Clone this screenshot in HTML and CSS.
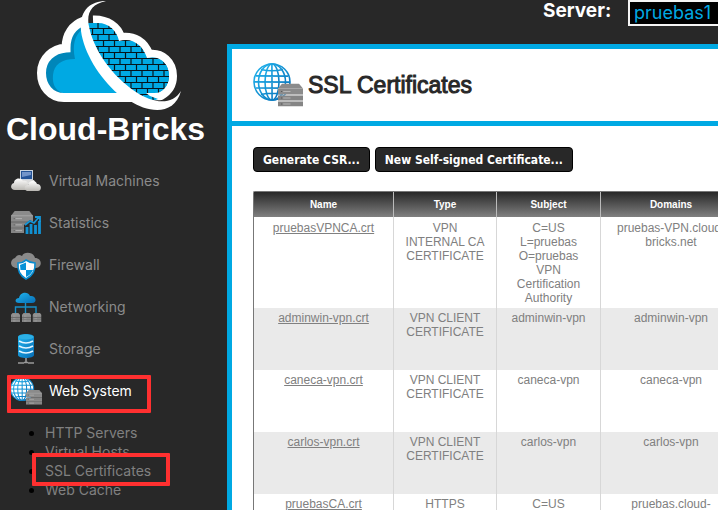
FILE: index.html
```html
<!DOCTYPE html>
<html lang="en">
<head>
<meta charset="utf-8">
<title>SSL Certificates - Cloud-Bricks</title>
<link rel="stylesheet" href="styles.css">
</head>
<body>
<svg class="defs" width="0" height="0" aria-hidden="true">
  <defs>
    <linearGradient id="blue" x1="0" y1="0" x2="1" y2="1"><stop offset="0" stop-color="#20b5ef"/><stop offset="1" stop-color="#076db5"/></linearGradient>
    <linearGradient id="puff" x1="0" y1="0" x2="0" y2="1"><stop offset="0" stop-color="#fff"/><stop offset="1" stop-color="#b9b7b2"/></linearGradient>
    <pattern id="bricks" width="11" height="12" patternUnits="userSpaceOnUse" patternTransform="translate(2 4)">
      <rect width="11" height="12" fill="#00a9e3"/>
      <path d="M0 .5H11M0 6.5H11M2.500 0V6M8 6V12" stroke="#06141b" stroke-width="1.2"/>
    </pattern>
    <symbol id="server" viewBox="0 0 24 23" preserveAspectRatio="none">
      <path d="M4 0H20L24 5V11H0V5Z" fill="#8b8b8b"/>
      <path d="M0 12H24V17H0ZM0 18H24V23H0Z" fill="#858585"/>
      <path d="M0 5H24M0 11.5H24M0 17.5H24" stroke="#b5b5b5" stroke-width=".7"/>
      <path d="M5 8H12M5 14.5H12M5 20.5H12" stroke="#bfbfbf" stroke-width=".8"/>
      <path d="M3 8H4M3 14.5H4M3 20.5H4" stroke="#555"/>
    </symbol>
    <symbol id="globe" viewBox="0 0 50 44">
      <g fill="none" stroke="url(#blue)" stroke-width="1.6">
        <circle cx="19" cy="19" r="18"/>
        <ellipse cx="19" cy="19" rx="7" ry="18"/>
        <ellipse cx="19" cy="19" rx="13.5" ry="18"/>
        <path d="M18.9 1L19.1 37M1 18.9L37 19.1M3 12.9L35 13.1M3 25L35 25.1M8 6.5Q19 9 30 6.5M8 31.5Q19 29 30 31.5"/>
      </g>
      <use href="#server" x="25" y="20.500" width="25" height="23"/>
    </symbol>
  </defs>
</svg>

<div class="layout">
  <aside class="sidebar">
    <a class="brand" href="#">
      <svg class="brand-mark" viewBox="36 0 148 112" aria-hidden="true">
        <path d="M132 97.500H64C50 97.500 41.500 86 41.500 73C41.500 58 53 49 66 48C66 34 73 25 84 22C86 46 98 70 126 96Z" fill="#0086b9"/>
        <path d="M126 94H66C56 92 52 85 53 75C54 65 61 59 75 59C72 44 75 36 82 29C86 51 100 74 126 94Z" fill="#00a9e3"/>
        <path d="M137 97.500H64C50 97.500 41.500 86 41.500 73C41.500 58 53 49 66 48C66 34 73 25 84 21" fill="none" stroke="#fff" stroke-width="9"/>
        <path d="M86 23H98C109 23 117 31 119 41C132 37 143 45 147 58C161 55 169 64 169 76C169 85 165 91 161 94L155 100H146C118 86 96 60 86 23Z" fill="url(#bricks)"/>
        <path d="M93 19.500C108 19 118 27 121 37C134 35 145 42 149 54C162 52 173 62 173 76C173 86 168 92 161 96C155 97 150 95 146 93" fill="none" stroke="#fff" stroke-width="8"/>
        <path d="M86 23H98C109 23 117 31 119 41C132 37 143 45 147 58C161 55 169 64 169 76C169 86 162 94 153 93L146 93L150 96L158 99L155 100H146C118 86 96 60 86 23Z" fill="url(#bricks)"/>
        <path d="M106 1C89 1 79 12 81 31C84 53 99 77 118 94L130 101C147 112 174 117 181 91C171 107 151 102 136 92C112 76 93 50 88.500 24C87 12 92 4 106 1Z" fill="#fff"/>
      </svg>
      <span class="brand-name">Cloud-Bricks</span>
    </a>

    <nav>
      <ul class="menu">
        <li><a href="#">
          <svg class="icon" viewBox="0 0 32 32" aria-hidden="true">
            <rect x="10.500" y="5.500" width="12" height="9" fill="#245397" stroke="#c9d3df"/>
            <path d="M12 7H21V10L12 12Z" fill="#7294c9"/>
            <path d="M8 15H24L26 19H7Z" fill="#ddd"/>
            <path d="M5 25C0 25 0 19 4 18C4 13 11 12 13 16C18 15 19 19 18 25Z" fill="url(#puff)"/>
            <path d="M17 26C13 24 15 20 18 20C19 15 26 15 27 19C32 19 32 26 28 26Z" fill="url(#puff)"/>
          </svg>Virtual Machines</a></li>
        <li><a href="#">
          <svg class="icon" viewBox="0 0 32 32" aria-hidden="true">
            <use href="#server" x="1" y="4" width="22" height="22"/>
            <path d="M14 18L20 13L23 15L30 8V28H14Z" fill="#282828"/>
            <path d="M17 20V27M21 17V27M25.500 18V27M29.500 14V27" stroke="#1191d2" stroke-width="2.800"/>
            <path d="M15 18L20 14L24 16L29 10M25 10H30V15" fill="none" stroke="#1396d8" stroke-width="1.800"/>
          </svg>Statistics</a></li>
        <li><a href="#">
          <svg class="icon" viewBox="0 0 32 32" aria-hidden="true">
            <path d="M7 19C0 19-1 11 5 9C7 6 9 5 12 7C14 2 24 3 25 9C32 9 33 18 26 19Z" fill="#8a8a8a"/>
            <path d="M8 14Q13 14 16 11Q20 14 25 14Q26 25 16 30Q7 25 8 14Z" fill="#fff" stroke="#078cd0" stroke-width="1.600"/>
            <path d="M10 16L16 13.500V21H10.500ZM16 21H23Q21 26 16 28Z" fill="#0792d8"/>
          </svg>Firewall</a></li>
        <li><a href="#">
          <svg class="icon" viewBox="0 0 32 32" aria-hidden="true">
            <path d="M9 12C4 12 5 7 9 7C10 1 18 0 20 5C26 4 28 12 22 12Z" fill="url(#blue)"/>
            <path d="M15.500 12V22M5.500 22V16H26V22M12 16H19" fill="none" stroke="#168fc7" stroke-width="1.400"/>
            <use href="#server" x="1" y="22" width="9" height="9"/><use href="#server" x="12" y="22" width="9" height="9"/><use href="#server" x="22.500" y="22" width="9" height="9"/>
          </svg>Networking</a></li>
        <li><a href="#">
          <svg class="icon" viewBox="0 0 32 32" aria-hidden="true">
            <path d="M8 4C8 0 24 0 24 4V22C24 26 8 26 8 22Z" fill="url(#blue)"/>
            <path d="M9 8Q16 12 23 8M9 13Q16 17 23 13M9 18Q16 22 23 18" fill="none" stroke="#e4f5ff" stroke-width="1.600"/>
            <ellipse cx="16" cy="4" rx="7.500" ry="2.500" fill="#2db0e5"/>
            <path d="M16 25V29M8 30H14M18 30H24M14 29.500H18" stroke="#999" stroke-width="1.600"/>
          </svg>Storage</a></li>
        <li class="marked"><a class="current" href="#">
          <svg class="icon" viewBox="0 0 50 44" aria-hidden="true"><circle cx="19" cy="19" r="18" fill="#fff"/><use href="#globe" width="50" height="44"/></svg>Web System</a></li>
      </ul>
      <ul class="submenu">
        <li><a href="#">HTTP Servers</a></li>
        <li><a href="#">Virtual Hosts</a></li>
        <li class="marked"><a href="#">SSL Certificates</a></li>
        <li><a href="#">Web Cache</a></li>
      </ul>
    </nav>
  </aside>

  <div class="page">
    <header class="topbar">
      <label for="server-choice">Server:</label>
      <select id="server-choice"><option>pruebas1</option></select>
    </header>
    <main class="panel">
      <div class="title">
        <svg class="title-icon" viewBox="0 0 50 44" aria-hidden="true"><use href="#globe" width="50" height="44"/></svg>
        <h1>SSL Certificates</h1>
      </div>
      <div class="content">
        <div class="actions">
          <button type="button">Generate CSR...</button>
          <button type="button">New Self-signed Certificate...</button>
        </div>
        <table>
          <colgroup><col class="c-name"><col class="c-type"><col class="c-subject"><col class="c-domains"></colgroup>
          <thead><tr><th>Name</th><th>Type</th><th>Subject</th><th>Domains</th></tr></thead>
          <tbody>
            <tr class="tall"><td><a href="#">pruebasVPNCA.crt</a></td><td>VPN<br>INTERNAL CA<br>CERTIFICATE</td><td>C=US<br>L=pruebas<br>O=pruebas<br>VPN<br>Certification<br>Authority</td><td>pruebas-VPN.cloud-<br>bricks.net</td></tr>
            <tr><td><a href="#">adminwin-vpn.crt</a></td><td>VPN CLIENT CERTIFICATE</td><td>adminwin-vpn</td><td>adminwin-vpn</td></tr>
            <tr><td><a href="#">caneca-vpn.crt</a></td><td>VPN CLIENT CERTIFICATE</td><td>caneca-vpn</td><td>caneca-vpn</td></tr>
            <tr><td><a href="#">carlos-vpn.crt</a></td><td>VPN CLIENT CERTIFICATE</td><td>carlos-vpn</td><td>carlos-vpn</td></tr>
            <tr><td><a href="#">pruebasCA.crt</a></td><td>HTTPS</td><td>C=US</td><td>pruebas.cloud-</td></tr>
          </tbody>
        </table>
      </div>
    </main>
  </div>
</div>
</body>
</html>
```
FILE: styles.css
```css
*, *::after { box-sizing: border-box; }
body {
  margin: 0;
  height: 100vh;
  overflow: hidden;
  background: #282828;
  color: #808080;
  font-family: "Liberation Sans", Arial, sans-serif;
}
.defs { position: absolute; }
.layout { display: grid; grid-template-columns: 227px minmax(0, 1fr); min-height: 100vh; }
ul { margin: 0; padding: 0; }

.brand { display: block; padding-left: 6px; color: #fff; text-decoration: none; }
.brand-mark { display: block; width: 148px; height: 112px; margin-left: 30px; }
.brand-name { display: block; font: bold 32px/34px "Liberation Sans", sans-serif; }

.menu { margin-top: 14px; list-style: none; }
.menu a {
  display: flex;
  align-items: center;
  gap: 7px;
  height: 42px;
  padding-left: 10px;
  color: #8b8b8b;
  font: 14px/20px Inter, sans-serif;
  text-decoration: none;
}
.menu a.current { color: #fff; }
.icon { width: 32px; height: 32px; flex: none; }
.submenu { margin-top: 11px; padding-left: 45px; color: #000; font: 14px/19px Inter, sans-serif; }
.submenu a { color: #808080; text-decoration: none; }
.submenu li { width: 115px; }
.marked { position: relative; }
.marked::after {
  content: "";
  position: absolute;
  border: 4px solid #ff3030;
  border-radius: 1px;
  pointer-events: none;
}
.menu .marked::after { top: 5px; left: 7px; width: 144px; height: 38px; }
.submenu .marked::after { top: -8px; left: -13px; width: 138px; height: 33px; }

.page { display: flex; flex-direction: column; min-width: 0; }
.topbar { display: flex; height: 44px; padding-left: 316px; overflow: hidden; }
.topbar label { flex: none; width: 85px; color: #fff; font: bold 19px/22px Inter, sans-serif; }
.topbar select {
  flex: none;
  width: 180px;
  height: 26px;
  padding: 0 4px;
  appearance: none;
  border: 2px solid #f5f5f5;
  border-radius: 0;
  background: #000;
  color: #00a9e3;
  font: 18px/22px Inter, sans-serif;
}
.panel {
  flex: 1;
  overflow: hidden;
  border: solid #00a9e3;
  border-width: 5px 0 0 5px;
  background: #fff;
}
.title { display: flex; align-items: center; gap: 5px; height: 77px; padding-left: 21px; border-bottom: 5px solid #00a9e3; }
.title-icon { width: 50px; height: 44px; flex: none; }
h1 { margin: 0; color: #282828; font: 23px/28px "Liberation Sans", sans-serif; -webkit-text-stroke: 1px #282828; }
.content { padding: 21px 0 0 21px; }
.actions { display: flex; gap: 5px; }
button {
  flex: none;
  height: 25px;
  padding: 0 9px;
  border: 1px solid #000;
  border-radius: 4px;
  background: #282828;
  color: #fff;
  font: bold 12px/16px "DejaVu Sans Condensed", "DejaVu Sans", sans-serif;
}
table {
  width: 489px;
  margin-top: 19px;
  table-layout: fixed;
  border-spacing: 0;
  border: solid #777;
  border-width: 1px 0 0 1px;
  border-radius: 2px 0 0 0;
  font-size: 12px;
  line-height: 14px;
  text-align: center;
}
.c-name { width: 140px; }
.c-type { width: 103px; }
.c-subject { width: 104px; }
.c-domains { width: 141px; }
thead { background: linear-gradient(#282828, #808080); }
th { height: 25px; padding: 0; border-right: 1px solid #bbb; color: #fff; font-size: 10px; }
td { height: 62px; padding: 3px 8px; border-right: 1px solid #d7d7d7; vertical-align: top; }
.tall td { height: 91px; padding-top: 4px; }
tbody tr:nth-child(even) { background: #eaeaea; }
td a { color: #808080; }
```
